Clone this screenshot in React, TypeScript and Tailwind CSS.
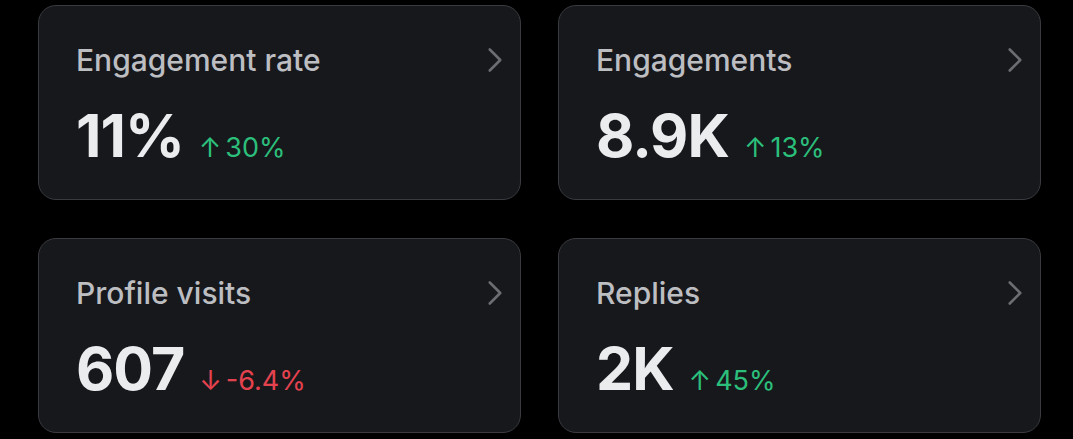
import { ChevronRight } from 'lucide-react'

type Stat = {
    label: string
    value: string
    change: string
    up: boolean
}

const stats: Stat[] = [
    { label: 'Engagement rate', value: '11%', change: '30%', up: true },
    { label: 'Engagements', value: '8.9K', change: '13%', up: true },
    { label: 'Profile visits', value: '607', change: '-6.4%', up: false },
    { label: 'Replies', value: '2K', change: '45%', up: true },
]

function StatCard({ stat }: { stat: Stat }) {
    return (
        <div className="relative h-[195px] rounded-[18px] border border-[#3a3b40] bg-[#17181c] pl-[37px] pt-[36px]">
            <p className="text-[30px] leading-[36px] font-medium text-[#bdbec2]">{stat.label}</p>
            <div className="mt-[28px] flex items-baseline">
                <span className="text-[59px] leading-[60px] font-bold text-[#ebecee] tracking-[-1px]">{stat.value}</span>
                <span
                    className={
                        stat.up
                            ? 'ml-[15px] text-[27px] font-normal text-[#2bbf7b]'
                            : 'ml-[15px] text-[27px] font-normal text-[#e5424f]'
                    }
                >
                    {stat.up ? '↑' : '↓'}
                    <span className="ml-[4px]">{stat.change}</span>
                </span>
            </div>
            <ChevronRight
                className="absolute right-[4px] top-[33px] text-[#6c6d72]"
                size={42}
                strokeWidth={1.5}
            />
        </div>
    )
}

export default function App() {
    return (
        <div
            className="h-[439px] w-[1073px] bg-black pl-[38px] pr-[32px] pt-[5px]"
            style={{ fontFamily: 'Inter, "Noto Sans", sans-serif' }}
        >
            <div className="grid grid-cols-2 gap-x-[37px] gap-y-[38px]">
                {stats.map((s) => (
                    <StatCard key={s.label} stat={s} />
                ))}
            </div>
        </div>
    )
}
